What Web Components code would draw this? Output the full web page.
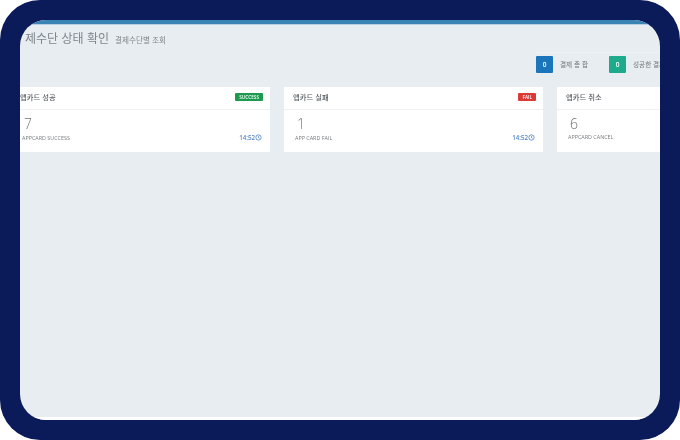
<!DOCTYPE html>
<html lang="ko">
<head>
<meta charset="utf-8">
<title>결제수단 상태 확인</title>
<style>
	html, body { margin: 0; background: #fff; }
	body { font-family: "Noto Sans CJK KR", "Noto Sans", sans-serif; }
</style>
</head>
<body>

<template id="device-frame-template">
	<style>
		:host { display: block; width: 680px; height: 440px; box-sizing: border-box; padding: 20px; background: #0b1a58; border-radius: 40px; }
		.screen { height: 400px; border-radius: 26px; overflow: hidden; background: #e8edf1; display: flex; flex-direction: column; }
		.top { height: 4px; background: #3a83b5; flex: none; border-bottom: 1px solid #b4cfe0; }
		.content { flex: 1; min-height: 0; }
		.bottom { height: 3px; background: #fff; flex: none; }
	</style>
	<div class="screen">
		<div class="top"></div>
		<div class="content"><slot></slot></div>
		<div class="bottom"></div>
	</div>
</template>

<template id="page-header-template">
	<style>
		:host { display: flex; align-items: baseline; gap: 6px; height: 27px; margin-left: -6px; white-space: nowrap; color: #7d858d; filter: blur(.6px); }
		/* the first letter is cut off by the sidebar in the original */
		.title { font-size: 12px; line-height: 25px; clip-path: inset(0 0 0 10.5px); }
		.sub { font-size: 7.6px; color: #7f868d; }
	</style>
	<span class="title"><slot></slot></span>
	<span class="sub"><slot name="sub"></slot></span>
</template>

<template id="stat-box-template">
	<style>
		:host { display: flex; align-items: center; gap: 7px; width: 73px; height: 17px; flex: none; white-space: nowrap; font-size: 6.6px; color: #6f767d; }
		.num { width: 17px; height: 17px; flex: none; display: flex; align-items: center; justify-content: center; border-radius: 1px; background: var(--box, #1b75bb); color: #fff; font-size: 6.5px; font-weight: 600; font-family: "Open Sans", sans-serif; filter: blur(.35px); }
		.label { filter: blur(.55px); margin-top: -1px; }
	</style>
	<span class="num"><slot name="num"></slot></span>
	<span class="label"><slot></slot></span>
</template>

<template id="status-card-template">
	<style>
		:host { display: block; width: 259px; flex: none; height: 65px; background: #fff; color: #676a6c; }
		.head { height: 23px; box-sizing: border-box; display: flex; align-items: center; justify-content: space-between; padding: 0 7px 2px 9px; border-bottom: 1px solid #eef1f3; font-size: 7.3px; font-weight: 500; color: #5a5f64; }
		.title { filter: blur(.5px); }
		::slotted([slot=badge]) { height: 8px; padding: 0 4px; display: flex; align-items: center; border-radius: 1px; background: var(--badge, #1c9b50); color: #fff; font: 600 4.7px "Open Sans", sans-serif; filter: blur(.3px); }
		.body { padding: 6px 8px 0 11px; font-family: "Open Sans", sans-serif; filter: blur(.55px); }
		.num { font-size: 14px; font-weight: 300; line-height: 16px; color: #6f7478; margin-left: 2px; }
		.row { display: flex; justify-content: space-between; align-items: center; margin-top: 1px; font-size: 5.4px; color: #777c80; }
		.time { display: flex; align-items: center; font-size: 6.2px; font-weight: 600; color: #5487c4; }
		svg { width: 7px; height: 7px; display: block; }
	</style>
	<div class="head">
		<span class="title"><slot name="title"></slot></span>
		<slot name="badge"></slot>
	</div>
	<div class="body">
		<div class="num"><slot name="count"></slot></div>
		<div class="row">
			<span><slot name="label"></slot></span>
			<span class="time"><slot name="time"></slot>
				<svg viewBox="0 0 10 10" fill="none" stroke="#5487c4" stroke-width="1.2"><circle cx="5" cy="5" r="3.8"/><path d="M5 3v2.2l1.5.8"/></svg>
			</span>
		</div>
	</div>
</template>

<template id="status-board-template">
	<style>
		:host { display: flex; flex-direction: column; height: 100%; }
		.stats { display: flex; align-items: flex-start; margin-left: 516px; padding-top: 3px; height: 32px; box-sizing: border-box; border-top: 1px solid #eef1f4; }
		.cards { display: flex; gap: 14px; margin: 3px 0 0 -9px; }
	</style>
	<slot name="header"></slot>
	<div class="stats"><slot name="stats"></slot></div>
	<div class="cards"><slot name="cards"></slot></div>
</template>

<device-frame>
	<status-board>
		<page-header slot="header">결제수단 상태 확인<span slot="sub">결제수단별 조회</span></page-header>

		<stat-box slot="stats"><span slot="num">0</span>결제 총 합</stat-box>
		<stat-box slot="stats" style="--box:#1eab8b"><span slot="num">0</span>성공한 결제</stat-box>

		<status-card slot="cards">
			<span slot="title">앱카드 성공</span><span slot="badge">SUCCESS</span>
			<span slot="count">7</span><span slot="label">APPCARD SUCCESS</span><span slot="time">14:52</span>
		</status-card>
		<status-card slot="cards" style="--badge:#dc3a35">
			<span slot="title">앱카드 실패</span><span slot="badge">FAIL</span>
			<span slot="count">1</span><span slot="label">APP CARD FAIL</span><span slot="time">14:52</span>
		</status-card>
		<status-card slot="cards">
			<span slot="title">앱카드 취소</span>
			<span slot="count">6</span><span slot="label">APPCARD CANCEL</span>
		</status-card>
	</status-board>
</device-frame>

<script>
	// every element just clones its template into an open shadow root
	function define(name) {
		customElements.define(name, class extends HTMLElement {
			constructor() {
				super();
				const template = document.querySelector('#' + name + '-template');
				this.attachShadow({mode: 'open'}).appendChild(template.content.cloneNode(true));
			}
		});
	}

	['device-frame', 'page-header', 'stat-box', 'status-card', 'status-board'].forEach(define);
</script>
</body>
</html>
